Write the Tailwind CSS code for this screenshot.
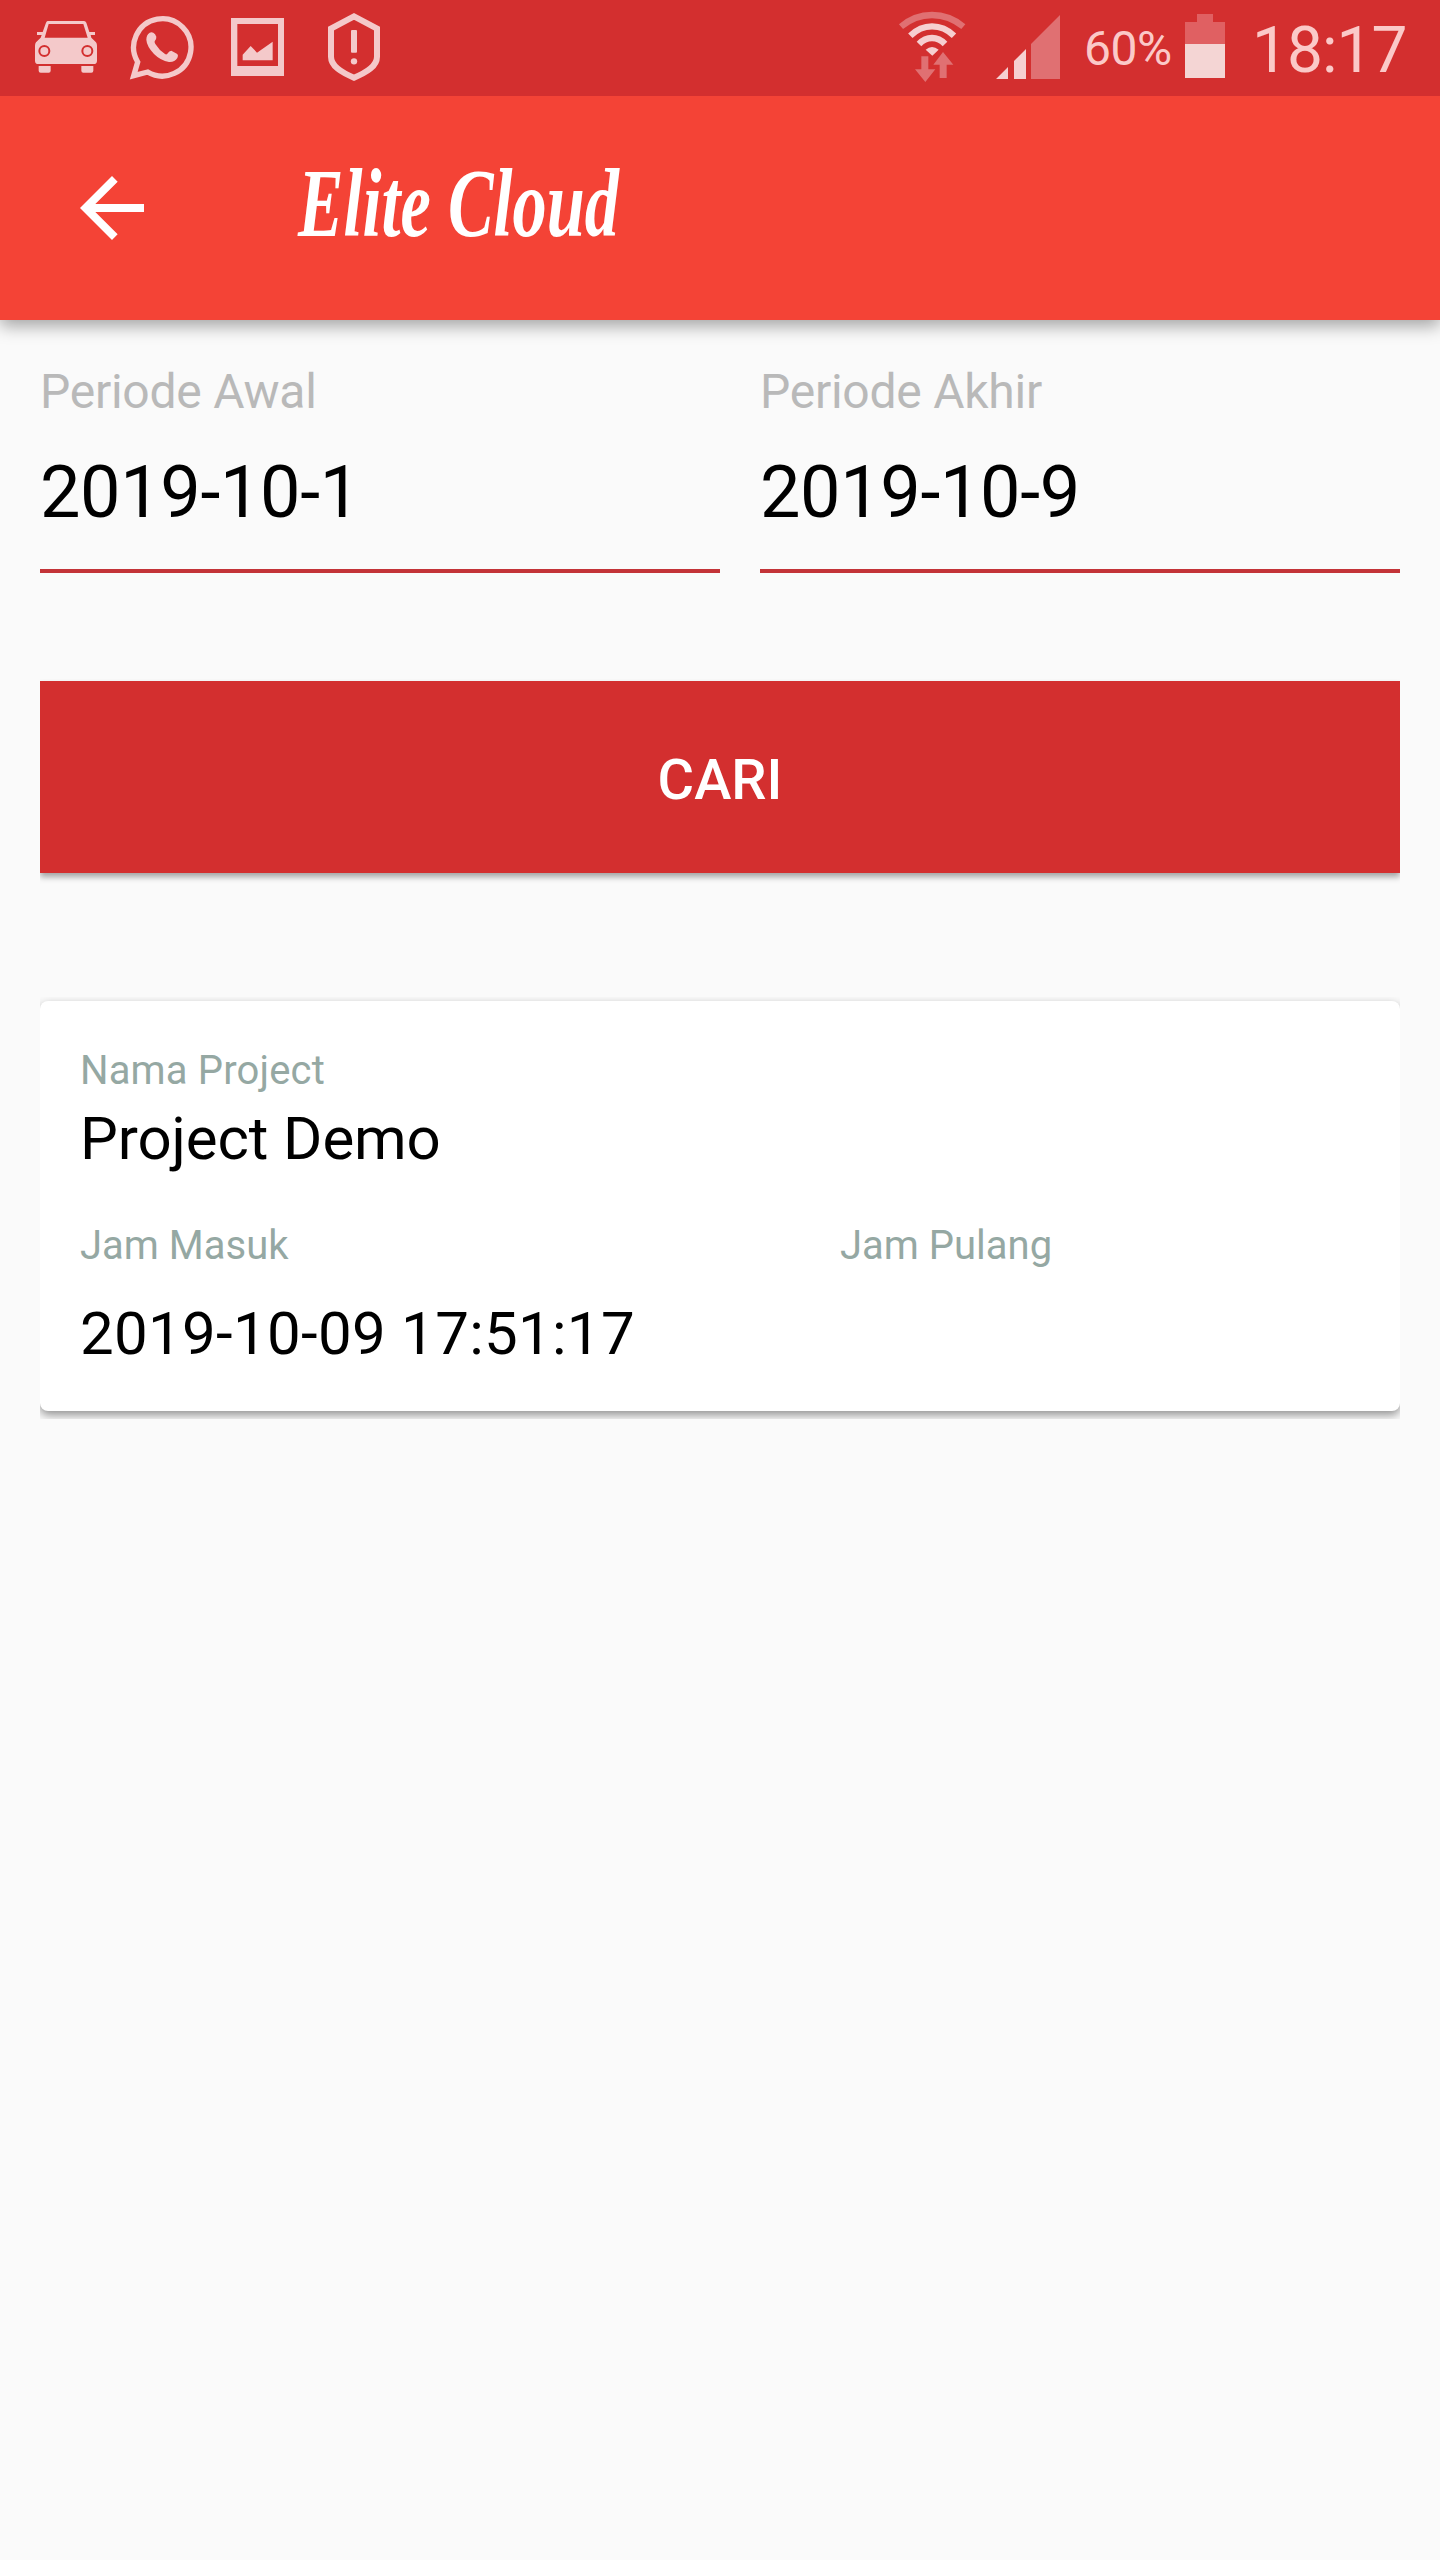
<!DOCTYPE html>
<html lang="id">

<head>
    <meta charset="UTF-8">
    <meta name="viewport" content="width=device-width, initial-scale=1.0">
    <title>Elite Cloud</title>
    <script src="https://cdn.jsdelivr.net/npm/@tailwindcss/browser@4"></script>
</head>

<body class="min-h-screen bg-[#fafafa] font-['Roboto',sans-serif] text-black">
    <!-- status bar -->
    <div class="relative z-10 flex h-24 items-center bg-[#d32f2f] pl-[33px] text-[#fbc9c8]">
        <!-- car -->
        <svg class="h-24 w-[66px]" viewBox="99 0 198 288" fill="#f4c9ca">
            <path fill-rule="evenodd"
                d="M143 63H252Q257 63 259 68L268 96H285V105H272L274 113L288 127Q291 131 291 137V182Q291 192 281 192H115Q105 192 105 182V137Q105 131 108 127L122 113L125 105H111V96H128L138 68Q140 63 143 63ZM146 72L134 113H263L250 72ZM133 135A18 18 0 1 0 133 171A18 18 0 1 0 133 135ZM262 135A18 18 0 1 0 262 171A18 18 0 1 0 262 135Z" />
            <circle cx="133" cy="153" r="12" />
            <circle cx="262" cy="153" r="12" />
            <path d="M116 198H152V212Q152 218 146 218H122Q116 218 116 212ZM244 198H280V212Q280 218 274 218H250Q244 218 244 212Z" />
        </svg>
        <!-- whatsapp -->
        <svg class="ml-[30px] h-24 w-[66px]" viewBox="387 0 198 288">
            <path d="M401 227L413 186A86 86 0 1 1 443 216Z" fill="none" stroke="#f4c9ca" stroke-width="16" />
            <path
                d="M449 98Q454 95 460 98Q466 101 469 110Q470 117 464 124Q463 127 466 132Q477 150 495 162Q499 165 502 161Q508 152 514 152L532 162Q536 166 532 174Q524 187 507 186Q482 182 462 162Q440 138 439 119Q439 104 449 98Z"
                fill="#f4c9ca" />
        </svg>
        <!-- picture -->
        <svg class="ml-9 h-24 w-[54px]" viewBox="693 0 162 288" fill="#f4c9ca">
            <path fill-rule="evenodd" d="M693 54H852V228H693ZM712 72V198H834V72Z" />
            <path d="M728 164L752 138L771 158L818 125V181H728Z" />
        </svg>
        <!-- shield -->
        <svg class="ml-[42px] h-24 w-[54px]" viewBox="981 0 162 288">
            <path d="M1062 49L1131 86V170C1131 199 1100 217 1062 233C1024 217 993 199 993 170V86Z" fill="none"
                stroke="#f4c9ca" stroke-width="18" />
            <rect x="1053" y="90" width="18" height="68" rx="3" fill="#f4c9ca" />
            <circle cx="1062" cy="184" r="9.500" fill="#f4c9ca" />
        </svg>

        <!-- wifi -->
        <svg class="ml-[517px] h-24 w-[68px]" viewBox="54 0 204 288">
            <g fill="none">
                <path d="M63 80Q104 45 156 45Q208 45 250 80" stroke="#e07072" stroke-width="19" />
                <path d="M91 107Q120 79 156 79Q193 79 222 107" stroke="#f6cfd0" stroke-width="19" />
                <path d="M117 132Q134 114 156 114Q178 114 195 132" stroke="#f6cfd0" stroke-width="19" />
            </g>
            <path d="M137 149Q156 133 176 149L157 167Z" fill="#f6cfd0" />
            <path d="M124 169H145V208H166L136 246L105 208H124ZM189 156L220 194H200V234H179V194H160Z" fill="#e07072" />
        </svg>
        <!-- signal -->
        <svg class="ml-[30px] h-24 w-16" viewBox="348 0 192 288">
            <path d="M348 237L384 201V237ZM402 183L438 147V237H402Z" fill="#f6cfd0" />
            <path d="M453 132L540 45V237H453Z" fill="#e07072" />
        </svg>
        <span class="ml-6 w-[101px] pt-0.5 text-5xl tracking-[-0.5px]">60%</span>
        <!-- battery -->
        <svg class="h-24 w-10" viewBox="375 0 120 288">
            <path d="M411 42H459V66H495V132H375V66H411Z" fill="#e06062" />
            <path d="M375 132H495V234H375Z" fill="#f4d5d4" />
        </svg>
        <span class="ml-[27px] pt-1.5 text-[64px] leading-none tracking-[-1px]">18:17</span>
    </div>

    <!-- app bar -->
    <header class="flex h-56 items-center bg-[#f44336] pl-16 text-white shadow-[0_6px_16px_rgba(0,0,0,0.35)]">
        <svg class="size-24" viewBox="0 0 24 24" fill="currentColor">
            <path d="M20 11H7.830l5.590-5.590L12 4l-8 8 8 8 1.410-1.410L7.830 13H20v-2z" />
        </svg>
        <svg class="ml-[110px] h-56 w-[380px]" viewBox="270 96 380 224" fill="currentColor">
            <text x="298" y="236" textLength="321" lengthAdjust="spacingAndGlyphs"
                class="font-['Liberation_Serif',serif] text-[98px] font-bold italic">Elite Cloud</text>
        </svg>
    </header>

    <main class="px-10 pt-10">
        <!-- periode -->
        <div class="grid grid-cols-[680px_640px] gap-x-10">
            <div class="border-b-4 border-[#c33338] pb-7">
                <p class="text-5xl leading-[64px] tracking-[-0.25px] text-[#b9b9b9]">Periode Awal</p>
                <p class="mt-[21px] text-7xl leading-[96px] tracking-[-0.35px]">2019-10-1</p>
            </div>
            <div class="border-b-4 border-[#c33338] pb-7">
                <p class="text-5xl leading-[64px] tracking-[-0.25px] text-[#b9b9b9]">Periode Akhir</p>
                <p class="mt-[21px] text-7xl leading-[96px] tracking-[-0.35px]">2019-10-9</p>
            </div>
        </div>

        <!-- cari -->
        <button
            class="mt-[108px] block h-48 w-full bg-[#d32f2f] pt-1.5 text-[56px] font-medium text-white shadow-[0_4px_6px_rgba(0,0,0,0.35)] [clip-path:inset(-2px_0_-12px_0)]">CARI</button>

        <!-- project card -->
        <section
            class="mt-32 h-[410px] rounded-lg bg-white px-10 pt-[46px] shadow-[0_4px_10px_rgba(0,0,0,0.42)] [clip-path:inset(-4px_0_-8px_0)]">
            <p class="text-[40px] leading-[48px] tracking-[0.15px] text-[#95a8a3]">Nama Project</p>
            <p class="mt-2 text-6xl leading-[72px] tracking-[-0.1px]">Project Demo</p>
            <div class="mt-[47px] grid grid-cols-[760px_1fr] text-[40px] leading-[48px] text-[#95a8a3]">
                <p>Jam Masuk</p>
                <p>Jam Pulang</p>
            </div>
            <p class="mt-7 text-6xl leading-[72px] tracking-[0.3px]">2019-10-09 17:51:17</p>
        </section>
    </main>
</body>

</html>
